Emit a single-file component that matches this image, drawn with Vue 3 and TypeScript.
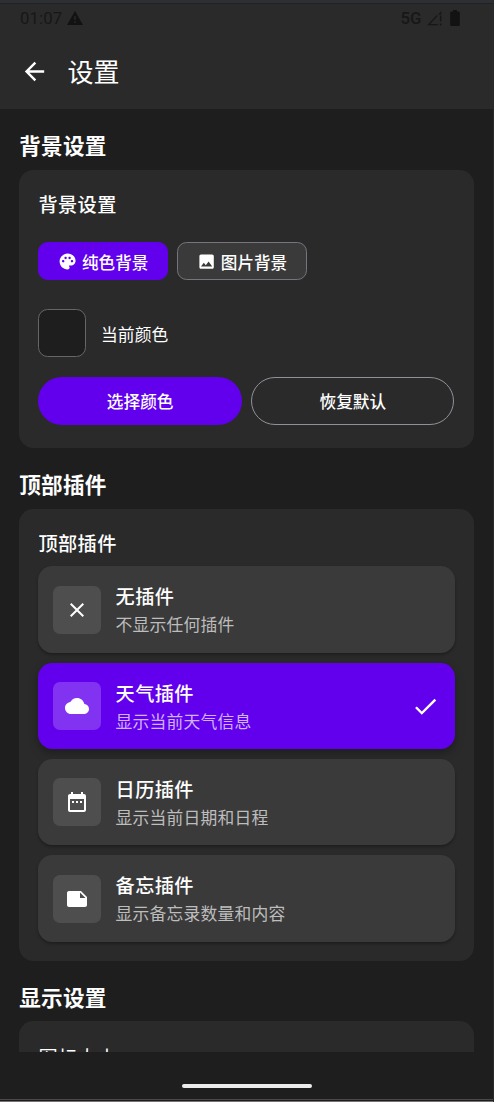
<script setup lang="ts">
interface Plugin {
  id: string
  name: string
  desc: string
  path: string
}

const plugins: Plugin[] = [
  {
    id: 'none',
    name: '无插件',
    desc: '不显示任何插件',
    path: 'M19 6.41 17.59 5 12 10.59 6.41 5 5 6.41 10.59 12 5 17.59 6.41 19 12 13.41 17.59 19 19 17.59 13.41 12z',
  },
  {
    id: 'weather',
    name: '天气插件',
    desc: '显示当前天气信息',
    path: 'M19.35 10.04C18.67 6.59 15.64 4 12 4 9.11 4 6.6 5.64 5.35 8.04 2.34 8.36 0 10.91 0 14c0 3.31 2.69 6 6 6h13c2.76 0 5-2.24 5-5 0-2.64-2.05-4.78-4.65-4.96z',
  },
  {
    id: 'calendar',
    name: '日历插件',
    desc: '显示当前日期和日程',
    path: 'M9 11H7v2h2v-2zm4 0h-2v2h2v-2zm4 0h-2v2h2v-2zm2-7h-1V2h-2v2H8V2H6v2H5c-1.11 0-1.99.9-1.99 2L3 20c0 1.1.89 2 2 2h14c1.1 0 2-.9 2-2V6c0-1.1-.9-2-2-2zm0 16H5V9h14v11z',
  },
  {
    id: 'memo',
    name: '备忘插件',
    desc: '显示备忘录数量和内容',
    path: 'M22 10l-6-6H4c-1.1 0-2 .9-2 2v12.01c0 1.1.9 1.99 2 1.99l16-.01c1.1 0 2-.89 2-1.99v-8zm-7-4.5l5.5 5.5H15V5.5z',
  },
]
const selected = 'weather'
</script>

<template>
  <div class="screen">
    <header class="top">
      <div class="status">
        <span class="clock">01:07</span>
        <svg class="warn" viewBox="0 0 16 14"><path fill-rule="evenodd" d="M8 0 16 14H0zM7.2 5.3v3.5h1.6V5.3zm0 4.9v1.6h1.6v-1.6z" /></svg>
        <span class="net">5G</span>
        <svg class="signal" viewBox="0 0 15 15"><path d="M10.4 4.4 1.6 13.7h9.2" /><path class="solid" d="M14.4 0v3.400h-3.400zM12.900 4.600h1.500v5.800h-1.500zM12.900 12.500h1.500v2h-1.500z" /></svg>
        <svg class="battery" viewBox="0 0 10 16"><path d="M3 0h4v1.600h1.600c.8 0 1.200.4 1.200 1.200v12c0 .8-.4 1.200-1.200 1.200H1.400C.6 16 .2 15.600.2 14.800v-12c0-.8.4-1.200 1.200-1.200H3z" /></svg>
      </div>
      <div class="appbar">
        <svg class="back" viewBox="0 0 24 24"><path d="M20 11H7.830l5.590-5.590L12 4l-8 8 8 8 1.410-1.410L7.830 13H20v-2z" /></svg>
        <h1>设置</h1>
      </div>
    </header>

    <main class="content">
      <h2>背景设置</h2>
      <section class="card bg-card">
        <h3>背景设置</h3>
        <div class="chips">
          <button class="chip active">
            <svg viewBox="0 0 24 24"><path d="M12 2C6.490 2 2 6.490 2 12s4.490 10 10 10c1.380 0 2.500-1.120 2.500-2.500 0-.61-.23-1.200-.64-1.670-.08-.1-.13-.21-.13-.33 0-.28.22-.5.5-.5H16c3.310 0 6-2.690 6-6 0-4.960-4.490-9-10-9zm5.500 11c-.83 0-1.500-.67-1.500-1.500s.67-1.500 1.500-1.500 1.500.67 1.500 1.500-.67 1.500-1.500 1.500zm-3-4c-.83 0-1.500-.67-1.500-1.500S13.670 6 14.500 6s1.500.67 1.500 1.500S15.330 9 14.500 9zM5 11.500c0-.83.67-1.500 1.500-1.500s1.500.67 1.500 1.500S7.330 13 6.500 13 5 12.330 5 11.500zm6-4c0 .83-.67 1.500-1.500 1.500S8 8.330 8 7.500 8.670 6 9.500 6s1.500.67 1.500 1.500z" /></svg>
            <span>纯色背景</span>
          </button>
          <button class="chip">
            <svg viewBox="0 0 24 24"><path d="M21 19V5c0-1.100-.9-2-2-2H5c-1.100 0-2 .9-2 2v14c0 1.100.9 2 2 2h14c1.100 0 2-.9 2-2zM8.500 13.500l2.500 3.010L14.500 12l4.500 6H5l3.500-4.500z" /></svg>
            <span>图片背景</span>
          </button>
        </div>
        <div class="current">
          <span class="swatch"></span>
          <span class="label">当前颜色</span>
        </div>
        <div class="actions">
          <button class="pill filled">选择颜色</button>
          <button class="pill outlined">恢复默认</button>
        </div>
      </section>

      <h2>顶部插件</h2>
      <section class="card plugin-card">
        <h3>顶部插件</h3>
        <div class="list">
          <div v-for="p in plugins" :key="p.id" class="item" :class="{ on: p.id === selected }">
            <span class="tile"><svg viewBox="0 0 24 24"><path :d="p.path" /></svg></span>
            <div class="text">
              <strong>{{ p.name }}</strong>
              <small>{{ p.desc }}</small>
            </div>
            <svg v-if="p.id === selected" class="check" viewBox="0 0 24 24"><path d="M9 16.170 4.830 12l-1.420 1.410L9 19 21 7l-1.410-1.410z" /></svg>
          </div>
        </div>
      </section>

      <h2 class="last">显示设置</h2>
      <section class="card size-card">
        <h3>图标大小</h3>
      </section>
    </main>

    <footer class="nav"><span class="handle"></span></footer>
  </div>
</template>

<style>
body {
  margin: 0;
  background: #1e1e1e;
}
</style>

<style scoped>
.screen {
  box-sizing: border-box;
  width: 494px;
  height: 1102px;
  display: flex;
  flex-direction: column;
  overflow: hidden;
  background: #1e1e1e;
  color: #fff;
  border-right: 1px solid #29292a;
  font-family: Roboto, "Noto Sans CJK SC", sans-serif;
}
svg { display: block; flex: none; fill: currentColor; }
h1, h2, h3 { margin: 0; }
.top {
  box-sizing: border-box;
  flex: none;
  height: 109px;
  background: #2a2a2a;
  border-top: 3px solid #2e2f35;
}
.status {
  box-sizing: border-box;
  height: 33px;
  display: flex;
  align-items: center;
  padding: 0 33.5px 4px 20px;
  border-top: 1px solid #202122;
  color: #121212;
  font-size: 16.8px;
}
.clock { width: 42px; letter-spacing: .1px; color: #171717; }
.warn { width: 16px; height: 14px; margin-left: 5px; }
.net { margin-left: auto; font-size: 16.8px; font-weight: 500; color: #171717; }
.signal { width: 15px; height: 15px; margin: 1px 0 0 5px; fill: none; stroke: #171717; stroke-width: 1.3; }
.signal .solid { fill: #171717; stroke: none; }
.battery { width: 10px; height: 16px; margin-left: 8px; }
.appbar { box-sizing: border-box; height: 71px; display: flex; align-items: center; padding-left: 19.6px; }
.back { width: 29px; height: 29px; }
h1 { margin: 3px 0 0 19px; font-size: 26px; line-height: 34px; font-weight: 400; }
.content { flex: none; height: 943px; overflow: hidden; padding: 0 19.2px; }
h2 {
  box-sizing: border-box;
  height: 33px;
  margin: 20px 0 8px 0;
  padding-top: 1px;
  font-size: 21.6px;
  line-height: 33px;
  letter-spacing: .25px;
  font-weight: 700;
}
.last { margin-bottom: 7.4px; }
.card {
  box-sizing: border-box;
  background: #2a2a2a;
  border-radius: 14.4px;
  padding: 19px 19.2px;
}
.bg-card { height: 278px; }
.plugin-card { height: 452px; }
.size-card { height: 120px; }
h3 {
  box-sizing: border-box;
  height: 32px;
  padding-top: 1px;
  font-size: 19.2px;
  line-height: 32px;
  letter-spacing: .4px;
  font-weight: 500;
}
.size-card h3 { padding-top: 2.6px; font-weight: 400; }
.chips { display: flex; gap: 9.6px; margin-top: 21px; }
button { font: inherit; color: #fff; padding: 0; border: 0; }
.chip {
  box-sizing: border-box;
  width: 129.3px;
  height: 38px;
  display: flex;
  align-items: center;
  padding: 2px 0 0 18.6px;
  gap: 4.8px;
  border: 1px solid #76747c;
  border-radius: 9.6px;
  background: #3a3a3a;
  font-size: 16.6px;
  font-weight: 500;
}
.chip svg { width: 19.2px; height: 19.2px; margin-top: -1px; }
.chip.active { background: #6200ee; border-color: #6200ee; }
.current {
  display: flex;
  align-items: center;
  gap: 14.6px;
  margin-top: 29px;
  font-size: 16.8px;
}
.label { padding-top: 2px; letter-spacing: .1px; }
.swatch {
  box-sizing: border-box;
  width: 48px;
  height: 48px;
  border: 1px solid #666;
  border-radius: 9.6px;
  background: #1e1e1e;
}
.actions { display: flex; gap: 9.4px; margin-top: 20px; }
.pill {
  box-sizing: border-box;
  width: 203px;
  height: 48px;
  border-radius: 24px;
  font-size: 16.7px;
  font-weight: 500;
}
.pill.filled { width: 203.6px; background: #6200ee; }
.outlined { background: transparent; border: 1px solid #938f99; }
.list { display: flex; flex-direction: column; gap: 9.9px; margin-top: 6.4px; }
.item {
  box-sizing: border-box;
  height: 86.4px;
  display: flex;
  align-items: center;
  padding: .7px 14.4px 0;
  border-radius: 14.4px;
  background: #3a3a3a;
  box-shadow: 0 2px 3px rgba(0, 0, 0, .28);
}
.item.on { background: #6200ee; box-shadow: 0 4px 10px rgba(0, 0, 0, .3); }
.tile {
  width: 48px;
  height: 48px;
  display: grid;
  place-items: center;
  border-radius: 7px;
  background: #4e4e4e;
}
.on .tile { background: #8133f1; }
.tile svg { width: 24px; height: 24px; }
.text { display: flex; flex-direction: column; margin-left: 14.8px; padding-top: 2.6px; }
strong { font-size: 19.2px; line-height: 29px; letter-spacing: .4px; font-weight: 500; }
small { font-size: 16.8px; line-height: 27px; letter-spacing: .2px; color: #bdbdbd; }
.on small { color: #d0b3fa; }
.check { width: 28.8px; height: 28.8px; margin-left: auto; }
.nav {
  box-sizing: border-box;
  flex: 1;
  display: flex;
  justify-content: center;
  padding-top: 32px;
  background: linear-gradient(#4a484c, #4a484c) 0 47px / 100% 1px no-repeat;
  border-bottom: 1px solid #77736f;
}
.handle { width: 130px; height: 4px; border-radius: 2px; background: #ececec; }
</style>
